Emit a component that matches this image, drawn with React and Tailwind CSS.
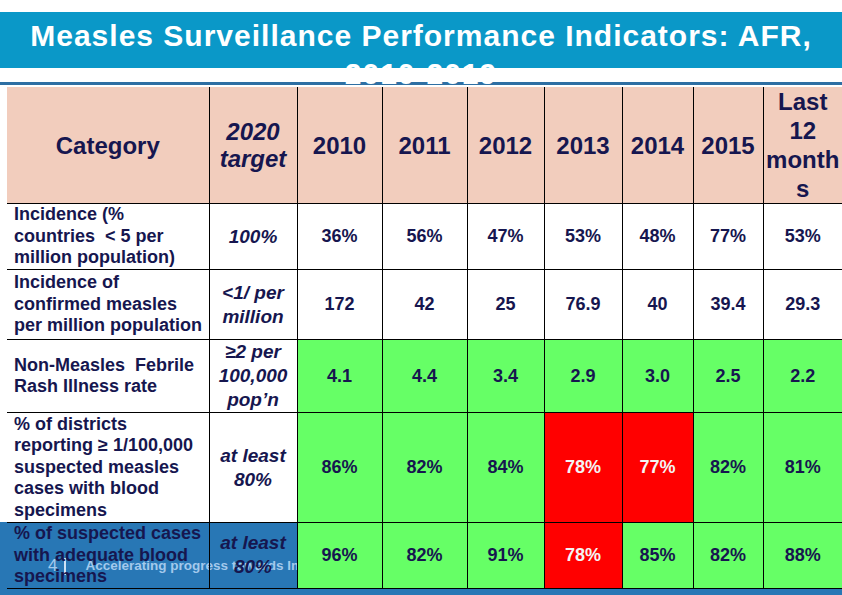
import React from "react";

const GREEN = "bg-[#66ff66]";
const RED = "bg-[#ff0000] text-[#f4f4f4]";

const rows = [
  {
    h: "h-[66px]",
    label: ["Incidence (%", "countries\u00a0 < 5 per", "million population)"],
    target: ["100%"],
    values: [["36%"], ["56%"], ["47%"], ["53%"], ["48%"], ["77%"], ["53%"]],
  },
  {
    h: "h-[70px]",
    label: ["Incidence of", "confirmed measles", "per million population"],
    target: ["<1/ per", "million"],
    values: [["172"], ["42"], ["25"], ["76.9"], ["40"], ["39.4"], ["29.3"]],
  },
  {
    h: "h-[73px]",
    label: ["Non-Measles\u00a0 Febrile", "Rash Illness rate"],
    target: ["\u22652 per", "100,000", "pop\u2019n"],
    values: [
      ["4.1", GREEN],
      ["4.4", GREEN],
      ["3.4", GREEN],
      ["2.9", GREEN],
      ["3.0", GREEN],
      ["2.5", GREEN],
      ["2.2", GREEN],
    ],
  },
  {
    h: "h-[110px]",
    label: [
      "% of districts",
      "reporting \u2265 1/100,000",
      "suspected measles",
      "cases with blood",
      "specimens",
    ],
    target: ["at least", "80%"],
    values: [
      ["86%", GREEN],
      ["82%", GREEN],
      ["84%", GREEN],
      ["78%", RED],
      ["77%", RED],
      ["82%", GREEN],
      ["81%", GREEN],
    ],
  },
  {
    h: "h-[64px]",
    label: ["% of suspected cases", "with adequate blood", "specimens"],
    target: ["at least", "80%"],
    values: [
      ["96%", GREEN],
      ["82%", GREEN],
      ["91%", GREEN],
      ["78%", RED],
      ["85%", GREEN],
      ["82%", GREEN],
      ["88%", GREEN],
    ],
  },
];

const years = ["2010", "2011", "2012", "2013", "2014", "2015"];

const lines = (arr) =>
  arr.map((t, i) => (
    <React.Fragment key={i}>
      {i > 0 && <br />}
      {t}
    </React.Fragment>
  ));

export default function App() {
  return (
    <div className="relative w-[842px] h-[595px] overflow-hidden bg-white font-['Liberation_Sans',Arial,sans-serif]">
      {/* footer band, sits under the table */}
      <div className="absolute inset-x-0 top-[522px] bottom-0 bg-[#2877b5]">
        <div className="flex items-center pl-[48px] pt-[35px] text-[#a3c9ec]">
          <span className="text-[17px] leading-[18px]">4</span>
          <span className="ml-[7px] h-[17px] w-[2px] bg-[#cfe3f5]" />
          <span className="ml-[19px] text-[13.5px] font-bold leading-[18px] whitespace-nowrap">
            Accelerating progress towards Immunization Agenda 2030
          </span>
        </div>
      </div>

      {/* title */}
      <div className="relative pt-[12px]">
        <div className="h-[56px] bg-[#0a98c8]" />
        <div className="h-[14px]" />
        <div className="h-[3px] bg-[#2e6fa3]" />
        <div className="h-[2px]" />
        <h1 className="absolute inset-x-0 top-[17px] text-center text-[30px] leading-[38px] font-bold tracking-[1px] text-white">
          Measles Surveillance Performance Indicators: AFR,
          <br />
          2010-2019
        </h1>
      </div>

      <table className="relative z-10 ml-[7px] w-[835px] table-fixed border-collapse text-[#16164f]">
        <colgroup>
          <col className="w-[202px]" />
          <col className="w-[88px]" />
          <col className="w-[85px]" />
          <col className="w-[85px]" />
          <col className="w-[77px]" />
          <col className="w-[78px]" />
          <col className="w-[71px]" />
          <col className="w-[70px]" />
          <col className="w-[79px]" />
        </colgroup>
        <thead>
          <tr className="h-[116px] bg-[#f2cdbd] text-[24px] font-bold leading-[29px] border-b border-black">
            <th className="p-0 text-center">Category</th>
            <th className="p-0 text-center italic leading-[27px] border-l border-black">
              2020
              <br />
              target
            </th>
            {years.map((y) => (
              <th key={y} className="p-0 text-center border-l border-black">
                {y}
              </th>
            ))}
            <th className="p-0 text-center border-l border-black">
              Last
              <br />
              12
              <br />
              month
              <br />s
            </th>
          </tr>
        </thead>
        <tbody>
          {rows.map((r, ri) => (
            <tr key={ri} className={`${r.h} border-b border-black`}>
              <td className="px-[7px] py-0 text-[18px] font-bold leading-[21.5px] whitespace-nowrap align-middle">
                {lines(r.label)}
              </td>
              <td className="p-0 text-center text-[19px] font-bold italic leading-[24px] whitespace-nowrap border-l border-black align-middle">
                {lines(r.target)}
              </td>
              {r.values.map(([v, c], vi) => (
                <td
                  key={vi}
                  className={`p-0 text-center text-[18px] font-bold border-l border-black align-middle ${c || ""}`}
                >
                  {v}
                </td>
              ))}
            </tr>
          ))}
        </tbody>
      </table>
    </div>
  );
}
